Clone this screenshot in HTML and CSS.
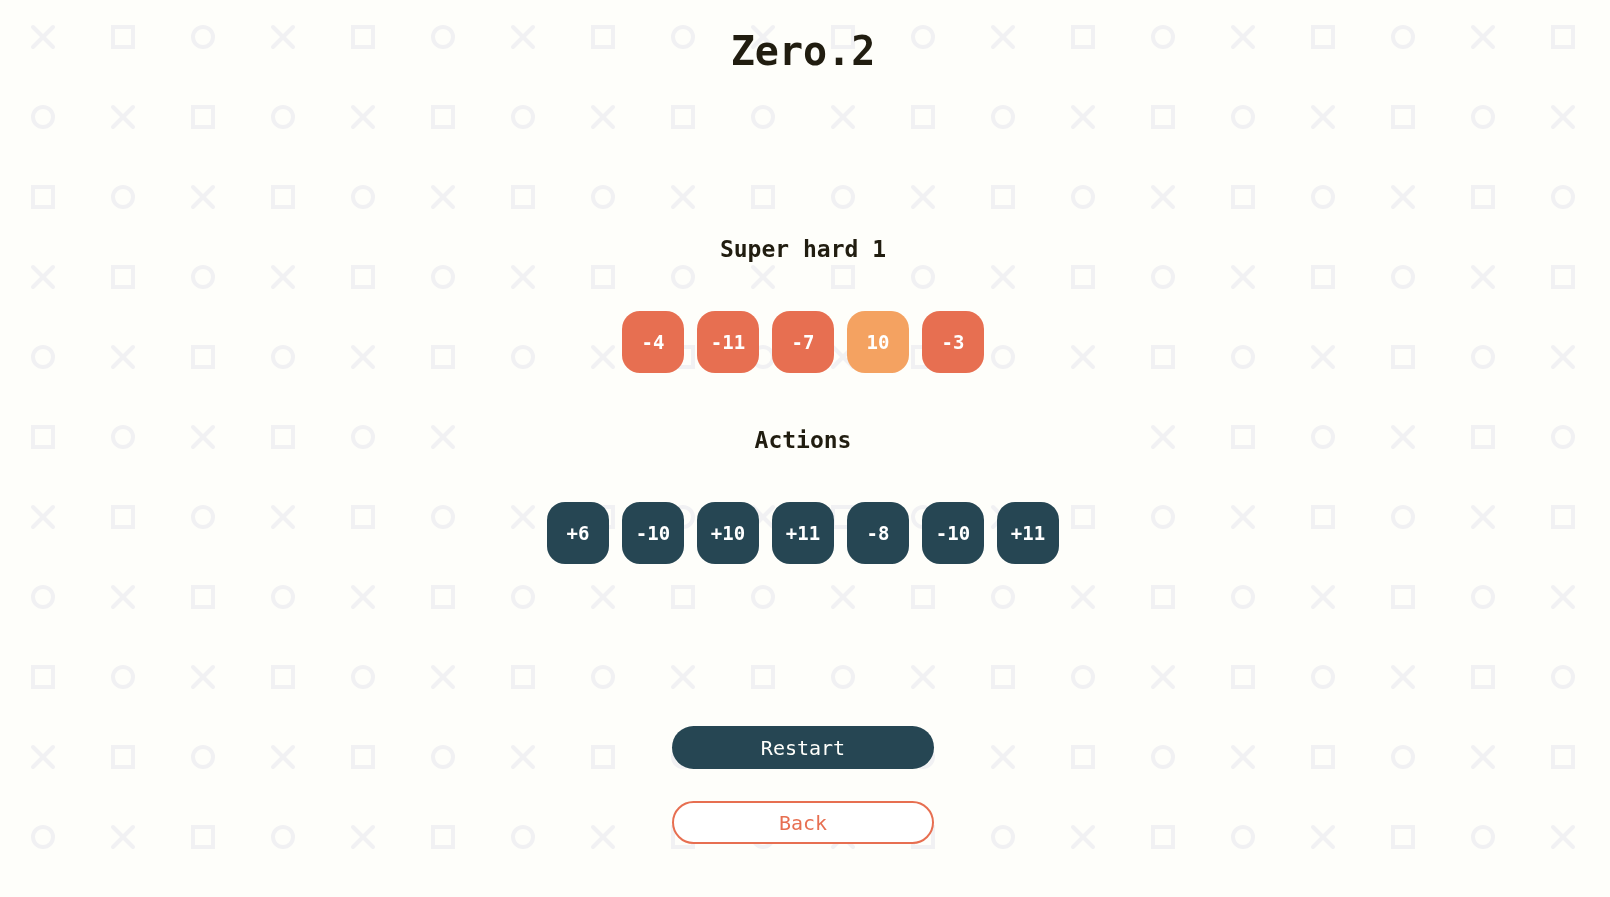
FILE: index.html
```html
<!DOCTYPE html>
<html lang="en">
<head>
<meta charset="utf-8">
<title>Zero.2</title>
<link rel="stylesheet" href="styles.css">
</head>
<body>
<svg class="bg-pattern" aria-hidden="true">
  <defs>
    <pattern id="shapes" patternUnits="userSpaceOnUse" x="3" y="-3" width="240" height="240">
      <g fill="none" stroke="#f1f1f3" stroke-width="4" stroke-linecap="round">
        <!-- row 0 -->
        <path d="M30 30 L50 50 M50 30 L30 50"/>
        <rect x="110" y="30" width="20" height="20" stroke-linecap="butt"/>
        <circle cx="200" cy="40" r="10"/>
        <!-- row 1 -->
        <circle cx="40" cy="120" r="10"/>
        <path d="M110 110 L130 130 M130 110 L110 130"/>
        <rect x="190" y="110" width="20" height="20" stroke-linecap="butt"/>
        <!-- row 2 -->
        <rect x="30" y="190" width="20" height="20" stroke-linecap="butt"/>
        <circle cx="120" cy="200" r="10"/>
        <path d="M190 190 L210 210 M210 190 L190 210"/>
      </g>
    </pattern>
  </defs>
  <rect width="100%" height="100%" fill="url(#shapes)"/>
</svg>

<main class="app">
  <h1 class="title">Zero.2</h1>

  <h2 class="level">Super hard 1</h2>
  <div class="tiles">
    <div class="tile tile-neg">-4</div>
    <div class="tile tile-neg">-11</div>
    <div class="tile tile-neg">-7</div>
    <div class="tile tile-pos">10</div>
    <div class="tile tile-neg">-3</div>
  </div>

  <h2 class="actions-head">Actions</h2>
  <div class="tiles">
    <button class="tile tile-action">+6</button>
    <button class="tile tile-action">-10</button>
    <button class="tile tile-action">+10</button>
    <button class="tile tile-action">+11</button>
    <button class="tile tile-action">-8</button>
    <button class="tile tile-action">-10</button>
    <button class="tile tile-action">+11</button>
  </div>

  <button class="btn btn-restart">Restart</button>
  <button class="btn btn-back">Back</button>
</main>
</body>
</html>
```

FILE: styles.css
```css
html, body {
  margin: 0;
  padding: 0;
  background: #fefefa;
  height: 100%;
  overflow: hidden;
}

body {
  font-family: "DejaVu Sans Mono", "Liberation Mono", monospace;
  color: #211d10;
}

.bg-pattern {
  position: fixed;
  top: 0;
  left: 0;
  width: 100%;
  height: 100%;
  z-index: 0;
}

.app {
  position: relative;
  z-index: 1;
  display: flex;
  flex-direction: column;
  align-items: center;
  padding: 28px 4px 0 0;
}

.title {
  margin: 0;
  font-size: 40px;
  line-height: 47px;
  font-weight: bold;
}

.level {
  margin: 160px 0 0;
  font-size: 23px;
  line-height: 28px;
  font-weight: bold;
}

.tiles {
  display: flex;
  gap: 13px;
}

.level + .tiles {
  margin-top: 48px;
}

.actions-head {
  margin: 0;
  width: 640px;
  padding: 53px 0 48px;
  background: #fefefa;
  text-align: center;
  font-size: 23px;
  line-height: 28px;
  font-weight: bold;
}

.tile {
  width: 62px;
  height: 62px;
  border: none;
  border-radius: 18px;
  display: flex;
  align-items: center;
  justify-content: center;
  padding: 0;
  font-family: "DejaVu Sans Mono", "Liberation Mono", monospace;
  font-size: 19px;
  font-weight: bold;
  color: #ffffff;
}

.tile-neg {
  background: #e76f51;
}

.tile-pos {
  background: #f4a261;
}

.tile-action {
  background: #264653;
  cursor: pointer;
}

.btn {
  width: 262px;
  height: 43px;
  border-radius: 22px;
  font-family: "DejaVu Sans Mono", "Liberation Mono", monospace;
  font-size: 20px;
  padding: 0;
  cursor: pointer;
}

.btn-restart {
  margin-top: 162px;
  background: #264653;
  border: none;
  color: #fefefa;
}

.btn-back {
  margin-top: 32px;
  background: #ffffff;
  border: 2px solid #e76f51;
  color: #e76f51;
}
```
